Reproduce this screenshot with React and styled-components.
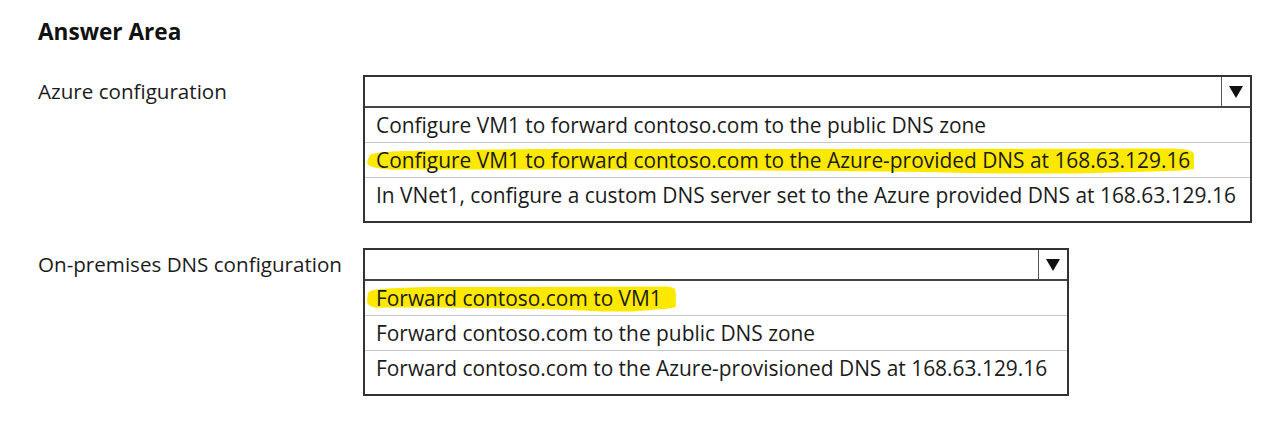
import styled, { createGlobalStyle } from 'styled-components';

const GlobalStyle = createGlobalStyle`
  html, body {
    margin: 0;
    padding: 0;
    background: #ffffff;
  }
  body {
    font-family: "Open Sans", Lato, "Liberation Sans", sans-serif;
    color: #1b1b1b;
  }
`;

const Page = styled.main`
  padding: 17px 0 0 38px;
  display: flex;
  flex-direction: column;
`;

const Heading = styled.h1`
  margin: 0 0 28px;
  font-size: 22.6px;
  font-weight: 700;
  line-height: 30px;
  color: #111;
`;

const Question = styled.section`
  display: grid;
  grid-template-columns: 325px auto;
  align-items: start;
  margin-bottom: 25px;
`;

const Label = styled.div`
  font-size: 20.6px;
  line-height: 31px;
  padding-top: 1px;
`;

const Dropdown = styled.div`
  width: ${(p) => p.$width}px;
  box-sizing: border-box;
  border: 2px solid #333;
  background: #fff;
`;

const Header = styled.div`
  display: flex;
  justify-content: flex-end;
  height: 29px;
  border-bottom: 2px solid #444;
`;

const ArrowCell = styled.div`
  width: 28px;
  border-left: 1px solid #555;
  display: flex;
  align-items: center;
  justify-content: center;
`;

const Options = styled.ul`
  list-style: none;
  margin: 0;
  padding: 0 0 8px;
`;

const Option = styled.li`
  height: 35px;
  box-sizing: border-box;
  padding: 3px 11px 0;
  font-size: 20.9px;
  line-height: 28px;
  white-space: nowrap;
  border-bottom: 1px solid #c9c9c9;

  &:last-child {
    border-bottom: none;
  }
`;

const Marked = styled.span`
  position: relative;
  display: inline-block;
  isolation: isolate;
`;

const Stroke = styled.svg`
  position: absolute;
  left: -9px;
  top: 2px;
  width: calc(100% + ${(p) => p.$reach + 9}px);
  height: 26px;
  z-index: -1;
`;

function Triangle() {
  return (
    <svg width="14" height="12" viewBox="0 0 14 12">
      <polygon points="0,0 14,0 7,12" fill="#111" />
    </svg>
  );
}

function Highlight({ reach, children }) {
  return (
    <Marked>
      <Stroke $reach={reach} viewBox="0 0 100 24" preserveAspectRatio="none">
        <path
          d="M0.3,7 C0.8,3 3,2.5 20,1 L97,0.5 C99.5,1 100,3 100,7 L100,19 C99,21.5 95,21.5 90,22.5 C85,24 78,24 70,22.5 C50,20.5 25,19.5 3,20 C1,19.5 0,17 0,13 Z"
          fill="#fde900"
        />
      </Stroke>
      {children}
    </Marked>
  );
}

const questions = [
  {
    label: 'Azure configuration',
    width: 889,
    options: [
      'Configure VM1 to forward contoso.com to the public DNS zone',
      'Configure VM1 to forward contoso.com to the Azure-provided DNS at 168.63.129.16',
      'In VNet1, configure a custom DNS server set to the Azure provided DNS at 168.63.129.16',
    ],
    answer: 1,
    reach: 4,
  },
  {
    label: 'On-premises DNS configuration',
    width: 706,
    options: [
      'Forward contoso.com to VM1',
      'Forward contoso.com to the public DNS zone',
      'Forward contoso.com to the Azure-provisioned DNS at 168.63.129.16',
    ],
    answer: 0,
    reach: 14,
  },
];

export default function App() {
  return (
    <>
      <GlobalStyle />
      <Page>
        <Heading>Answer Area</Heading>
        {questions.map((q) => (
          <Question key={q.label}>
            <Label>{q.label}</Label>
            <Dropdown $width={q.width}>
              <Header>
                <ArrowCell>
                  <Triangle />
                </ArrowCell>
              </Header>
              <Options>
                {q.options.map((opt, i) => (
                  <Option key={opt}>
                    {i === q.answer ? <Highlight reach={q.reach}>{opt}</Highlight> : opt}
                  </Option>
                ))}
              </Options>
            </Dropdown>
          </Question>
        ))}
      </Page>
    </>
  );
}
